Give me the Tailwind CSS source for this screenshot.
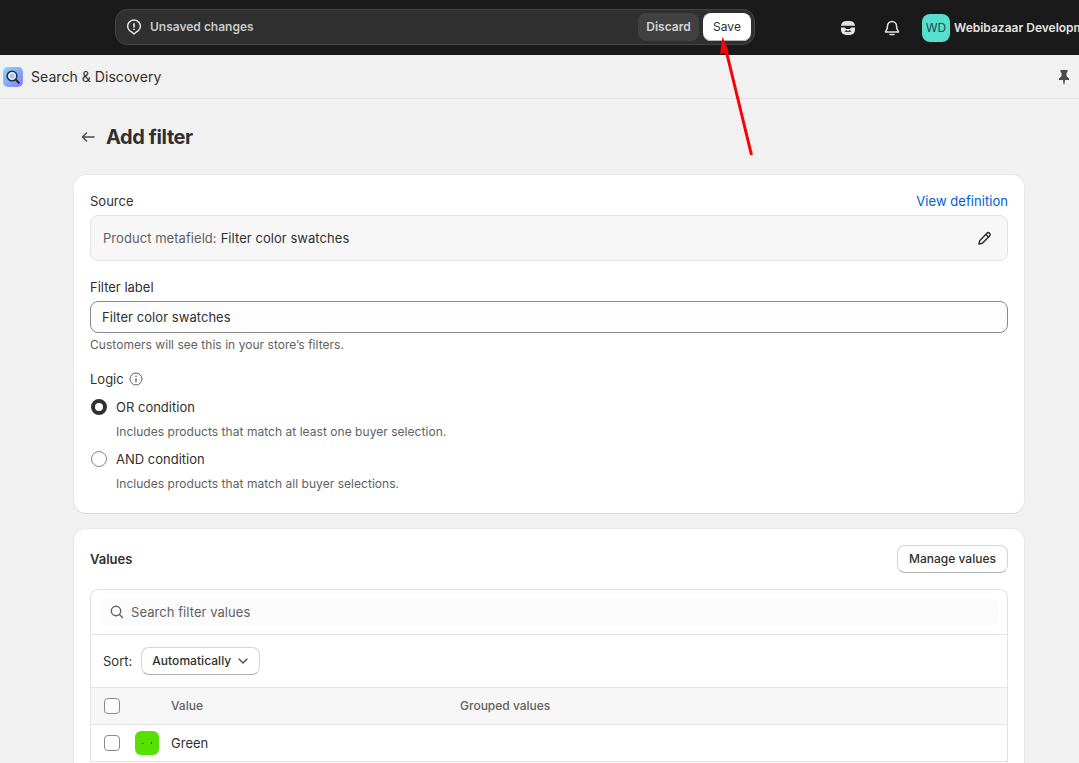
<!DOCTYPE html>
<html lang="en">

<head>
  <meta charset="UTF-8">
  <title>Add filter</title>
  <script src="https://cdn.jsdelivr.net/npm/@tailwindcss/browser@4"></script>
</head>

<body class="h-[763px] overflow-hidden bg-[#f1f1f1] font-['Inter','Liberation_Sans',sans-serif] text-[13px] leading-5 text-[#303030] relative">
  <!-- Top bar -->
  <header class="h-[55px] bg-[#1a1a1a] flex items-center overflow-hidden">
    <div class="ml-[115px] mt-[-1px] w-[640px] shrink-0 h-[36px] rounded-xl bg-[#303030] border border-[#444] flex items-center pl-[10px] pr-[3px]">
      <svg class="w-[16px] h-[16px] text-[#e3e3e3]" viewBox="0 0 16 16" fill="none" stroke="currentColor" stroke-width="1.500">
        <path d="M8 15l-2-1.800A6.300 6.300 0 1 1 10 13.200z" stroke-linejoin="round" />
        <path d="M8 4.300v4.200M8 9.800v1.300" stroke-width="1.700" />
      </svg>
      <span class="ml-[8px] text-[12px] font-semibold text-[#c9c9c9]">Unsaved changes</span>
      <button class="ml-auto h-[28px] w-[61px] rounded-lg bg-[#414141] text-[12px] font-semibold text-[#d4d4d4]">Discard</button>
      <button class="ml-[4px] h-[28px] w-[48px] rounded-lg bg-white text-[12px] font-normal text-[#303030] shadow-[inset_0_-1px_0_#b5b5b5]">Save</button>
    </div>
    <svg class="ml-[84px] shrink-0 w-[18px] h-[18px] text-[#e3e3e3]" viewBox="0 0 18 18" fill="none">
      <rect x="2" y="2" width="14" height="14" rx="5" fill="currentColor" />
      <path d="M2 6.800h14v1.700h-4l-1 1.500H7L6 8.500H2z" fill="#1a1a1a" />
      <path d="M5.500 12.300l1.800-1 1.700.8 1.700-.8 1.800 1-1.800.8-1.700-.4-1.700.4z" fill="#1a1a1a" />
    </svg>
    <svg class="ml-[26px] shrink-0 w-[18px] h-[18px] text-[#e3e3e3]" viewBox="0 0 18 18" fill="none" stroke="currentColor" stroke-width="1.500" stroke-linejoin="round">
      <path d="M9 2.500a4.500 4.500 0 0 0-4.500 4.500c0 3.500-1.500 4.500-2 6h13c-.5-1.500-2-2.500-2-6A4.500 4.500 0 0 0 9 2.500z" />
      <path d="M7 15.500h4" stroke-linecap="round" />
    </svg>
    <div class="ml-[21px] w-[28px] h-[28px] shrink-0 rounded-lg bg-[#56dfcf] flex items-center justify-center text-[12px] text-[#1b4a45]">WD</div>
    <span class="ml-[4px] text-[12px] font-semibold whitespace-nowrap overflow-hidden w-[125px] shrink-0 text-[#e3e3e3]">Webibazaar Development</span>
  </header>

  <!-- App bar -->
  <div class="h-[44px] border-b border-[#e6e6e6] flex items-center pl-[3px] pr-[7px]">
    <div class="w-[20px] h-[20px] rounded-[5px] bg-gradient-to-br from-[#7fd8fb] to-[#8a7bf5] flex items-center justify-center">
      <svg class="w-[16px] h-[16px]" viewBox="0 0 16 16" fill="none" stroke="#263041" stroke-width="1.600">
        <circle cx="7" cy="7" r="4.800" fill="#e8f1fa" />
        <circle cx="7" cy="7" r="2.500" fill="#a9c6ea" stroke="none" />
        <path d="M10.800 10.800l3 3" stroke-width="2.200" stroke-linecap="round" />
      </svg>
    </div>
    <span class="ml-[8px] text-[14px] tracking-[0.05px]">Search &amp; Discovery</span>
    <svg class="ml-auto w-[16px] h-[16px] text-[#4a4a4a]" viewBox="0 0 16 16" fill="currentColor">
      <path d="M4.500 1h7v2l-1 .7V7l2.500 2.500V11H9l-.6 4.500h-.8L7 11H3V9.500L5.500 7V3.700l-1-.7z" />
    </svg>
  </div>

  <main class="px-[74px] w-[1024px] box-content">
    <div class="w-[950px]">
      <div class="h-[76px] flex items-center pl-[6px]">
        <svg class="w-[16px] h-[16px] text-[#4a4a4a]" viewBox="0 0 16 16" fill="none" stroke="currentColor" stroke-width="1.500" stroke-linecap="round" stroke-linejoin="round">
          <path d="M14 8H2.500M6.500 4l-4 4 4 4" />
        </svg>
        <h1 class="ml-[10px] text-[20px] font-bold tracking-[-0.4px] text-[#303030]">Add filter</h1>
      </div>

      <!-- Filter settings -->
      <section class="h-[338px] rounded-xl bg-white shadow-[0_1px_0_#d9d9d9,0_0_0_1px_#e8e8e8] px-[16px] pt-[16px]">
        <div class="flex justify-between h-[20px]">
          <span>Source</span>
          <a class="text-[#005bd3] tracking-[0.05px]">View definition</a>
        </div>
        <div class="mt-[4px] h-[46px] rounded-lg border border-[#e3e3e3] bg-[#f7f7f7] flex items-center pl-[12px] pr-[14px]">
          <span class="text-[#616161] tracking-[0.05px]">Product metafield:</span>
          <span class="ml-[4px] tracking-[0.05px]">Filter color swatches</span>
          <svg class="ml-auto w-[16px] h-[16px] text-[#303030]" viewBox="0 0 16 16" fill="none" stroke="currentColor" stroke-width="1.500" stroke-linejoin="round">
            <path d="M2 14l.7-3.300 7.200-7.400a1.800 1.800 0 0 1 2.700 2.600l-7.300 7.400z" />
            <path d="M9 4.500l2.500 2.500" />
          </svg>
        </div>
        <div class="mt-[16px] h-[20px]">Filter label</div>
        <div class="mt-[4px] h-[32px] rounded-lg border border-[#8a8a8a] bg-[#fdfdfd] flex items-center pl-[11px] tracking-[0.05px]">Filter color swatches</div>
        <p class="mt-[2px] h-[20px] text-[12px] tracking-[0.04px] text-[#616161]">Customers will see this in your store’s filters.</p>
        <div class="mt-[14px] flex items-center h-[20px]">
          <span>Logic</span>
          <svg class="ml-[5px] w-[14px] h-[14px] text-[#616161]" viewBox="0 0 14 14" fill="none" stroke="currentColor">
            <circle cx="7" cy="7" r="6" />
            <path d="M7 6.200v4M7 3.700v1.200" stroke-width="1.300" />
          </svg>
        </div>
        <div class="mt-[8px] flex items-center h-[20px]">
          <span class="w-[16px] h-[16px] rounded-full border-[4.500px] border-[#303030] bg-white ml-[1px]"></span>
          <span class="ml-[9px]">OR condition</span>
        </div>
        <p class="mt-[5px] h-[20px] pl-[26px] text-[12px] tracking-[0.04px] text-[#616161]">Includes products that match at least one buyer selection.</p>
        <div class="mt-[7px] flex items-center h-[20px]">
          <span class="w-[16px] h-[16px] rounded-full border border-[#8a8a8a] bg-[#fdfdfd] ml-[1px]"></span>
          <span class="ml-[9px]">AND condition</span>
        </div>
        <p class="mt-[5px] h-[20px] pl-[26px] text-[12px] tracking-[0.04px] text-[#616161]">Includes products that match all buyer selections.</p>
      </section>

      <!-- Values -->
      <section class="mt-[16px] rounded-xl bg-white shadow-[0_0_0_1px_#e8e8e8] px-[16px] pt-[16px] pb-[16px]">
        <div class="flex items-center justify-between h-[28px]">
          <h2 class="font-semibold">Values</h2>
          <button class="h-[28px] w-[111px] rounded-lg bg-white border border-[#d4d4d4] border-b-[#b0b0b0] font-medium text-[12px]">Manage values</button>
        </div>
        <div class="mt-[16px] rounded-t-lg border border-b-0 border-[#e3e3e3]">
          <div class="h-[45px] border-b border-[#e3e3e3] flex items-center px-[8px]">
            <div class="h-[28px] w-full rounded-lg bg-[#fcfcfc] flex items-center pl-[10px]">
              <svg class="w-[16px] h-[16px] text-[#616161]" viewBox="0 0 16 16" fill="none" stroke="currentColor" stroke-width="1.400" stroke-linecap="round">
                <circle cx="7" cy="7" r="4.700" />
                <path d="M10.500 10.500l3 3" />
              </svg>
              <span class="ml-[6px] tracking-[0.06px] text-[#616161]">Search filter values</span>
            </div>
          </div>
          <div class="h-[52px] flex items-center pl-[12px]">
            <span>Sort:</span>
            <button class="ml-[9px] h-[28px] w-[119px] rounded-lg border border-[#d4d4d4] border-b-[#b0b0b0] bg-white flex items-center pl-[10px] font-medium text-[12px] tracking-[0.05px]">
              Automatically
              <svg class="ml-[6px] w-[12px] h-[12px] text-[#4a4a4a]" viewBox="0 0 12 12" fill="none" stroke="currentColor" stroke-width="1.300" stroke-linecap="round" stroke-linejoin="round">
                <path d="M2 4l4 4 4-4" />
              </svg>
            </button>
          </div>
          <div class="h-[38px] bg-[#f7f7f7] border-y border-[#e3e3e3] flex items-center pl-[13px] text-[12px] font-medium text-[#616161]">
            <span class="w-[16px] h-[16px] rounded-[4px] border border-[#8a8a8a] bg-white"></span>
            <span class="ml-[51px] w-[289px]">Value</span>
            <span>Grouped values</span>
          </div>
          <div class="h-[37px] border-b border-[#e3e3e3] flex items-center pl-[13px]">
            <span class="w-[16px] h-[16px] rounded-[4px] border border-[#8a8a8a] bg-white"></span>
            <span class="ml-[15px] w-[24px] h-[24px] rounded-md bg-[#58e000] flex items-center justify-center gap-[7px]">
              <span class="w-[2px] h-[1px] bg-[#2f6f4a]"></span>
              <span class="w-[1px] h-[2px] bg-[#1f5a5a]"></span>
            </span>
            <span class="ml-[12px]">Green</span>
          </div>
        </div>
      </section>
    </div>
  </main>

  <!-- Red annotation arrow -->
  <svg class="absolute left-0 top-0 w-[1079px] h-[763px] pointer-events-none" viewBox="0 0 1079 763" fill="none">
    <path d="M751.500 155L725.500 48" stroke="#fb0007" stroke-width="3" />
    <path d="M722.500 36.500L729 52L720 54z" fill="#fb0007" />
  </svg>
</body>

</html>
